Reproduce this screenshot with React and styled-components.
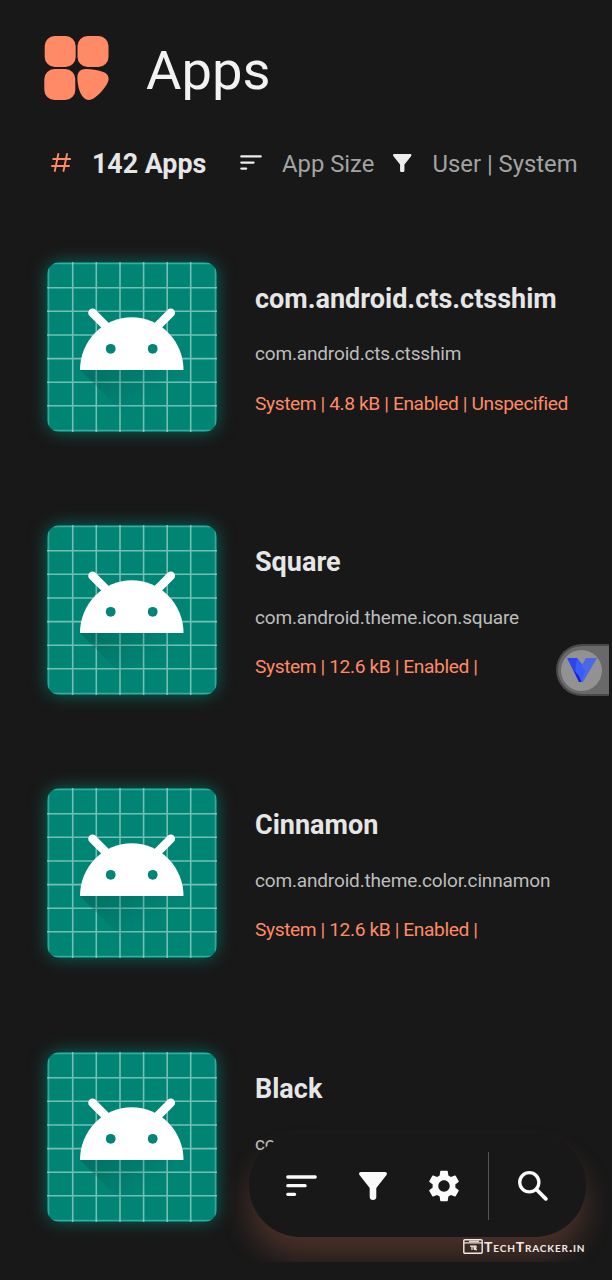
import React from "react";
import styled, { createGlobalStyle } from "styled-components";
import { MdSettings } from "react-icons/md";

const GlobalStyle = createGlobalStyle`
  *, *::before, *::after { box-sizing: border-box; }
  html, body { margin: 0; background: #181818; }
  body { font-family: Roboto, "Liberation Sans", sans-serif; }
  svg { display: block; flex: none; }
`;

const accent = "#ff8a65";

const Screen = styled.main`
  position: relative;
  width: 612px;
  height: 1280px;
  overflow: hidden;
  background: #181818;
`;

const Header = styled.header`
  display: flex;
  align-items: center;
  gap: 37px;
  height: 136px;
  padding: 0 44px;
`;

const Title = styled.h1`
  margin: 5px 0 0;
  color: #f2f2f2;
  font-size: 54.3px;
  font-weight: 400;
  line-height: 64px;
`;

const StatBar = styled.div`
  display: flex;
  align-items: center;
  height: 54px;
  padding-left: 51px;
  white-space: nowrap;
`;

const Count = styled.strong`
  width: 168px;
  padding: 2px 0 0 20px;
  color: #e6e6e6;
  font-size: 26.8px;
  font-weight: 700;
`;

const Stat = styled.span`
  width: ${(p) => p.$width}px;
  padding: 2px 0 0 ${(p) => p.$indent}px;
  color: #a3a3a3;
  font-size: 23.8px;
`;

const List = styled.ul`
  display: flex;
  flex-direction: column;
  gap: 93.3px;
  margin: 71.7px 0 0;
  padding: 0 0 0 46.7px;
  list-style: none;
`;

const Row = styled.li`
  display: flex;
  gap: 38.3px;
  height: 170px;
`;

const AppIcon = styled.div`
  flex: none;
  width: 170px;
  height: 170px;
  overflow: hidden;
  border-radius: 13px;
  background: #008577;
  box-shadow: 0 0 17px rgba(0, 150, 132, 0.6);
`;

const Details = styled.div`
  display: flex;
  flex-direction: column;
  padding-top: 20px;
  white-space: nowrap;
`;

const Name = styled.h2`
  margin: 0;
  color: #e6e6e6;
  font-size: 27px;
  font-weight: 700;
  line-height: 34px;
`;

const Package = styled.p`
  margin: 26.6px 0 0;
  color: #bdbdbd;
  font-size: 19px;
  letter-spacing: -0.16px;
  line-height: 24px;
`;

const Meta = styled.p`
  margin: 25.6px 0 0;
  color: ${accent};
  font-size: 19.2px;
  letter-spacing: -0.4px;
  line-height: 24px;
`;

const EdgeTab = styled.aside`
  position: absolute;
  top: 644px;
  right: 3px;
  display: flex;
  align-items: center;
  width: 53px;
  height: 52px;
  padding-left: 5px;
  border: 2px solid #484848;
  border-right: 0;
  border-radius: 26px 0 0 26px;
  background: #696969;
`;

const TabBadge = styled.div`
  display: grid;
  place-items: center;
  width: 41px;
  height: 41px;
  margin-left: -2px;
  border-radius: 50%;
  background: #929292;
`;

const GlowArea = styled.div`
  position: absolute;
  right: 0;
  bottom: 18px;
  width: 400px;
  height: 160px;
  padding: 32px 26px 0 37px;
  overflow: hidden;
`;

const ActionBar = styled.nav`
  display: flex;
  align-items: center;
  height: 103px;
  padding-left: 36px;
  border-radius: 52px;
  background: #181818;
  box-shadow: 0 20px 30px rgba(255, 138, 101, 0.22);
`;

const Action = styled.button`
  display: grid;
  place-items: center;
  width: 32px;
  height: 38px;
  margin-right: ${(p) => p.$after || 0}px;
  padding: 0;
  border: 0;
  background: none;
  color: #fafafa;
`;

const Divider = styled.span`
  width: 1px;
  height: 68px;
  margin-right: 28px;
  background: #555;
`;

const Watermark = styled.footer`
  position: absolute;
  left: 463px;
  top: 1238px;
  display: flex;
  align-items: center;
  gap: 1px;
  height: 17px;
  color: #f2e9e5;
  font-family: Lato, sans-serif;
  font-size: 14px;
  font-weight: 700;
  font-variant: small-caps;
  letter-spacing: 0.85px;
  white-space: nowrap;
`;

function LogoIcon() {
  return (
    <svg width="65" height="64" viewBox="0 0 65 64" fill={accent}>
      <rect x="0.7" y="0" width="31" height="31" rx="10" />
      <rect x="33.5" y="0" width="31" height="31" rx="10" />
      <rect x="0.3" y="33" width="31" height="31" rx="10" />
      <path d="M42 33C36 33 33.2 36.5 33.4 42C33.6 50 35.5 57 39 61C42.5 65 47 64.5 51 61.5C56 58 60 53 63 48C66.5 42 64 37.5 58.5 35.8C53 34 48 33 42 33Z" />
    </svg>
  );
}

function HashIcon() {
  return (
    <svg width="21" height="20" viewBox="0 0 21 20" stroke={accent} strokeWidth="1.9" strokeLinecap="round">
      <path d="M7.3 1 3.8 18M16 1l-3.5 17M2.2 6h17M1 13h17" />
    </svg>
  );
}

function SortIcon({ width = 31, height = 22 }) {
  return (
    <svg width={width} height={height} viewBox="0 0 31 22" stroke="currentColor" strokeWidth="3.3" strokeLinecap="round">
      <path d="M1.8 2h27.4M1.8 10.7h17.3M1.8 19.3h6.8" />
    </svg>
  );
}

function FilterIcon({ size = 28 }) {
  return (
    <svg width={size} height={size} viewBox="0 0 28 28" fill="currentColor">
      <path d="M2 0H26C28 0 28.5 1.8 27.3 3.3L17.3 16V25C17.3 26.7 16 28 14 28C12 28 10.7 26.7 10.7 25V16L.7 3.3C-.5 1.8 0 0 2 0Z" />
    </svg>
  );
}

function SearchIcon() {
  return (
    <svg width="30" height="30" viewBox="0 0 30 30" fill="none" stroke="currentColor" strokeWidth="3.3" strokeLinecap="round">
      <circle cx="11.3" cy="11.3" r="9.6" />
      <path d="m18.5 18.5 9.3 9.3" strokeWidth="3.8" />
    </svg>
  );
}

const gridLines = [25.7, 49.3, 73, 96.6, 120.2, 143.7];
const edgeLines = [1.7, 168.3];

function AndroidIcon({ id }) {
  return (
    <svg width="170" height="170" viewBox="0 0 170 170">
      <defs>
        <linearGradient id={id} x1="60" y1="100" x2="92" y2="145" gradientUnits="userSpaceOnUse">
          <stop offset="0" stopColor="#004d45" stopOpacity="0.32" />
          <stop offset="1" stopColor="#004d45" stopOpacity="0" />
        </linearGradient>
      </defs>
      <g stroke="#9fd6cf" strokeWidth="1.6" opacity="0.72">
        {gridLines.map((n) => (
          <path key={n} d={`M${n} 0V170M0 ${n}H170`} />
        ))}
      </g>
      <g stroke="#9fd6cf" strokeWidth="1.2" opacity="0.42">
        {edgeLines.map((n) => (
          <path key={n} d={`M${n} 0V170M0 ${n}H170`} />
        ))}
      </g>
      <path d="M33 108H136L170 142V170H95Z" fill={`url(#${id})`} />
      <path d="M33 108A51.7 52.7 0 0 1 136.5 108Z" fill="#fff" />
      <path d="m45.5 50.8 14 14M123.8 50.8l-14 14" stroke="#fff" strokeWidth="8.6" strokeLinecap="round" />
      <circle cx="63.7" cy="86.8" r="4.9" fill="#008577" />
      <circle cx="105.7" cy="86.8" r="4.9" fill="#008577" />
    </svg>
  );
}

function VMark() {
  return (
    <svg width="32" height="26" viewBox="0 0 32 26">
      <path d="M1 1H11L21 14L15 25H13Z" fill="#2c45ee" />
      <path d="M20 1H31L17 25H13L11 16Z" fill="#4d68e6" />
      <path d="M11 1 14.8 7.5 19.5 14 15 25H13L9 16Z" fill="#3a5cff" />
      <path d="M7 12 13 25H15.5L13 19Z" fill="#1b25c4" />
    </svg>
  );
}

function BrowserMark() {
  return (
    <svg width="20" height="15" viewBox="0 0 20 15" fill="none" stroke="currentColor">
      <rect x="0.8" y="0.8" width="18.4" height="13.4" rx="1" strokeWidth="1.4" />
      <path d="M1 3.9h18" strokeWidth="1.2" />
      <path d="M6 2.3h10" strokeWidth="1.2" />
      <path d="M7 7.2h4M9 7v4M11.3 11V7.2h1.7v1.8h-1.7l2.4 2.2" strokeWidth="1.2" />
    </svg>
  );
}

const apps = [
  { name: "com.android.cts.ctsshim", pkg: "com.android.cts.ctsshim", meta: "System | 4.8 kB | Enabled | Unspecified" },
  { name: "Square", pkg: "com.android.theme.icon.square", meta: "System | 12.6 kB | Enabled |" },
  { name: "Cinnamon", pkg: "com.android.theme.color.cinnamon", meta: "System | 12.6 kB | Enabled |" },
  { name: "Black", pkg: "co" },
];

const IconSlot = styled.span`
  display: flex;
  width: 22px;
  color: #eee;
`;

export default function App() {
  return (
    <>
      <GlobalStyle />
      <Screen>
        <Header>
          <LogoIcon />
          <Title>Apps</Title>
        </Header>
        <StatBar>
          <HashIcon />
          <Count>142 Apps</Count>
          <IconSlot>
            <SortIcon width={22} height={15.5} />
          </IconSlot>
          <Stat $width={131} $indent={20}>App Size</Stat>
          <IconSlot>
            <FilterIcon size={18.5} />
          </IconSlot>
          <Stat $width={180} $indent={17.6}>User | System</Stat>
        </StatBar>
        <List>
          {apps.map((app, i) => (
            <Row key={app.name}>
              <AppIcon>
                <AndroidIcon id={`shade-${i}`} />
              </AppIcon>
              <Details>
                <Name>{app.name}</Name>
                <Package>{app.pkg}</Package>
                {app.meta && <Meta>{app.meta}</Meta>}
              </Details>
            </Row>
          ))}
        </List>
        <EdgeTab>
          <TabBadge>
            <VMark />
          </TabBadge>
        </EdgeTab>
        <GlowArea>
          <ActionBar>
            <Action aria-label="Sort" $after={40}>
              <SortIcon />
            </Action>
            <Action aria-label="Filter" $after={36}>
              <FilterIcon />
            </Action>
            <Action aria-label="Settings" $after={31}>
              <MdSettings size={38} />
            </Action>
            <Divider />
            <Action aria-label="Search">
              <SearchIcon />
            </Action>
          </ActionBar>
        </GlowArea>
        <Watermark>
          <BrowserMark />
          TechTracker.in
        </Watermark>
      </Screen>
    </>
  );
}
